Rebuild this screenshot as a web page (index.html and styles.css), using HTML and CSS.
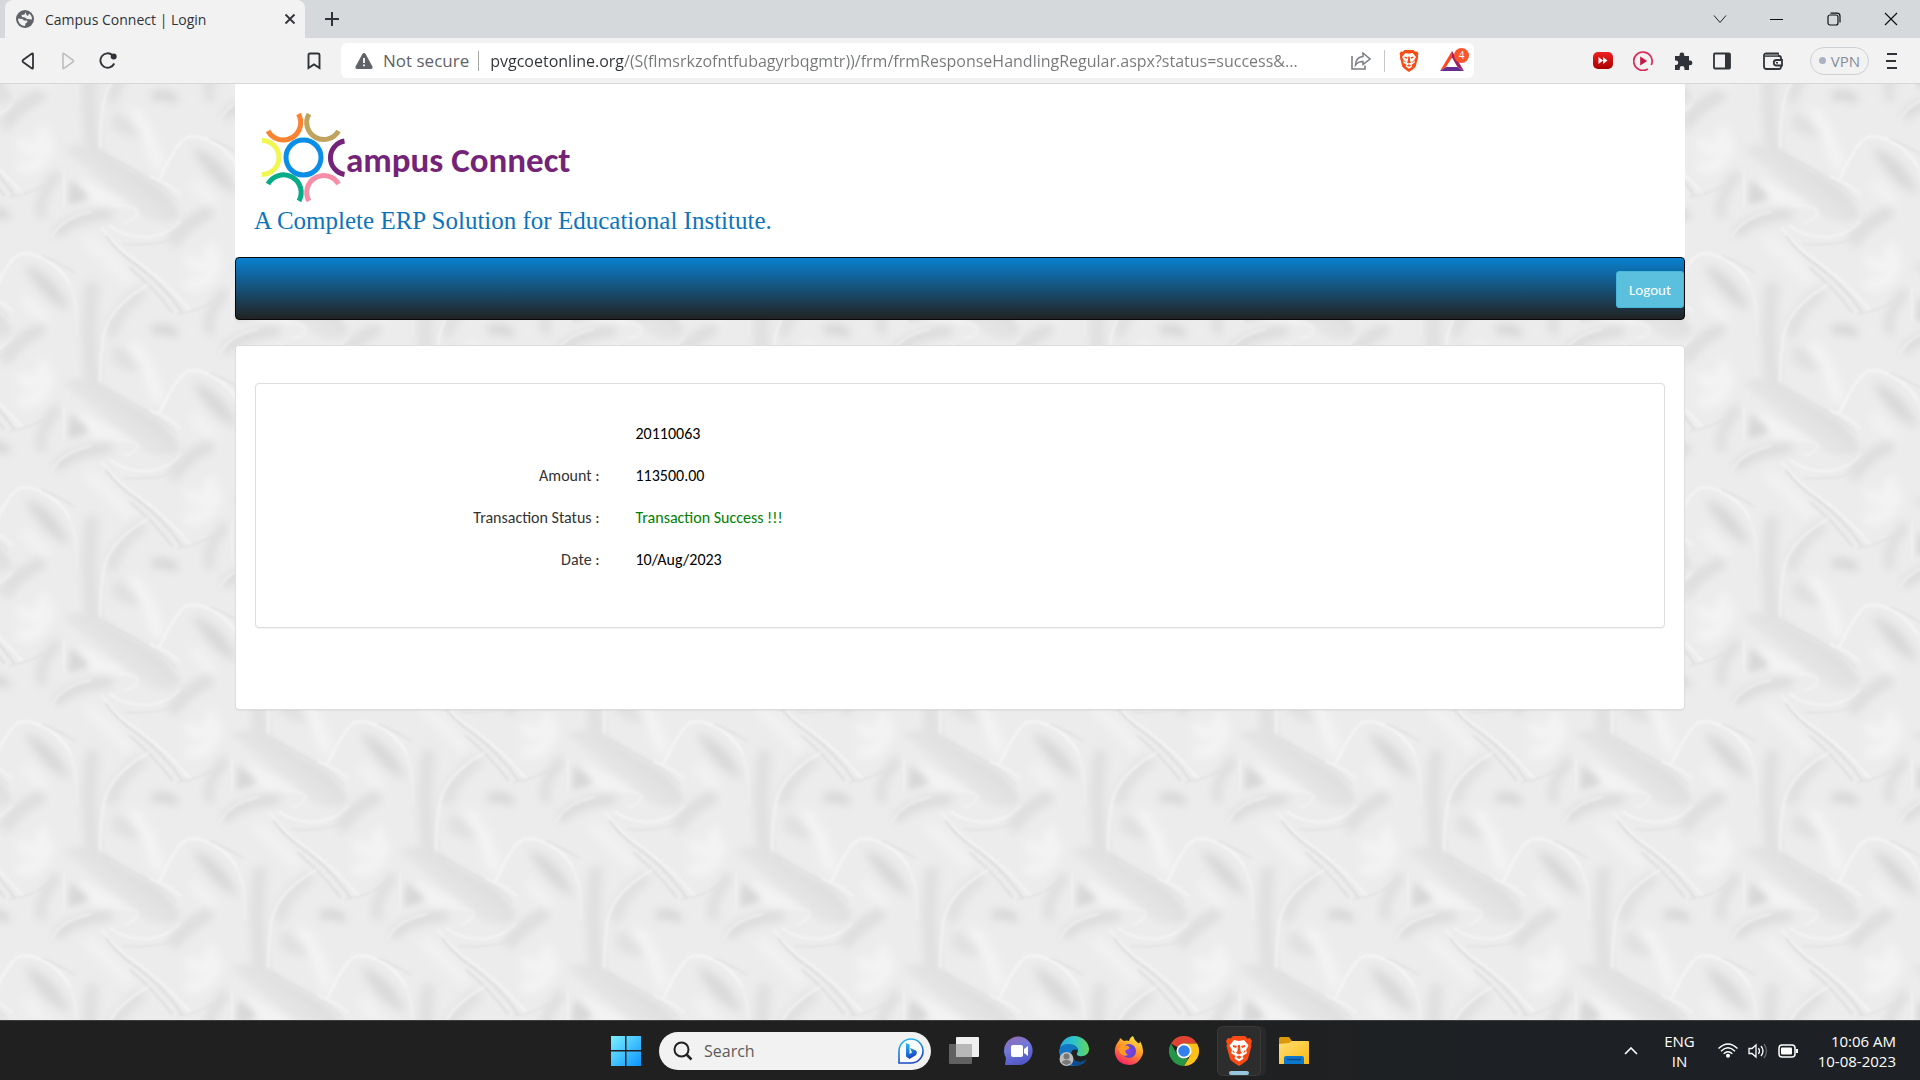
FILE: index.html
```html
<!DOCTYPE html>
<html lang="en">
<head>
<meta charset="utf-8">
<meta name="viewport" content="width=device-width, initial-scale=1">
<title>Campus Connect | Login</title>
<link rel="stylesheet" href="styles.css">
</head>
<body class="desktop">
<header class="browser">
  <div class="tab-strip">
    <div class="tab">
      <svg class="tab-icon" width="18" height="18" viewBox="0 0 18 18" aria-hidden="true"><circle cx="9" cy="9" r="9" fill="#5f6368"/><path d="M2 8.500 L6.500 9 L8 10.500 L11 10.500 L11.500 12 L9.500 13.500 L9 16 A7 7 0 0 1 2 8.500Z M9.500 2 L8.500 4.500 L5.500 5 L6 7 L9 7.500 L11 9 L16 9.500 A7 7 0 0 0 13 3.500 L12 6 L10.500 5Z" fill="#f2f2f2"/></svg>
      <span class="tab-title">Campus Connect | Login</span>
      <button class="icon-button" type="button" aria-label="Close tab"><svg width="12" height="12" viewBox="0 0 12 12"><path d="M1.500 1.500 L10.500 10.500 M10.500 1.500 L1.500 10.500" stroke="#303438" stroke-width="1.800"/></svg></button>
    </div>
    <button class="icon-button new-tab" type="button" aria-label="New tab"><svg width="16" height="16" viewBox="0 0 16 16"><path d="M8 1V15M1 8H15" stroke="#303438" stroke-width="2"/></svg></button>
    <div class="window-controls">
      <button class="icon-button" type="button" aria-label="Search tabs"><svg width="14" height="14" viewBox="0 0 14 14"><path d="M1 3.500 L7 10.500 L13 3.500" fill="none" stroke="#222"/></svg></button>
      <button class="icon-button" type="button" aria-label="Minimize"><svg width="14" height="14" viewBox="0 0 14 14"><path d="M0 7.500H13" stroke="#111"/></svg></button>
      <button class="icon-button" type="button" aria-label="Restore"><svg width="14" height="14" viewBox="0 0 14 14"><rect x="1" y="3" width="10" height="10" rx="2" fill="none" stroke="#111" stroke-width="1.200"/><path d="M3.500 1.200H10A3 3 0 0 1 13 4.200V10.500" fill="none" stroke="#111" stroke-width="1.200"/></svg></button>
      <button class="icon-button" type="button" aria-label="Close window"><svg width="14" height="14" viewBox="0 0 14 14"><path d="M1 1 L13 13 M13 1 L1 13" stroke="#111" stroke-width="1.200"/></svg></button>
    </div>
  </div>
  <div class="toolbar">
    <div class="nav-buttons">
      <button class="icon-button" type="button" aria-label="Back"><svg width="18" height="18" viewBox="0 0 18 18"><path d="M14 2.300V15.700Q14 17 13 16.400L4 10Q3 9 4 8L13 1.600Q14 1 14 2.300Z" fill="none" stroke="#303438" stroke-width="1.800"/></svg></button>
      <button class="icon-button" type="button" aria-label="Forward" disabled><svg width="18" height="18" viewBox="0 0 18 18"><path d="M4 2.300V15.700Q4 17 5 16.400L14 10Q15 9 14 8L5 1.600Q4 1 4 2.300Z" fill="none" stroke="#bdbdbd" stroke-width="1.600"/></svg></button>
      <button class="icon-button" type="button" aria-label="Reload"><svg width="18" height="18" viewBox="0 0 18 18"><path d="M13.500 3.200A7.200 7.200 0 1 0 15.200 11.500" fill="none" stroke="#303438" stroke-width="1.900"/><circle cx="14.700" cy="4.500" r="3" fill="#303438"/></svg></button>
      <button class="icon-button bookmark" type="button" aria-label="Bookmark this page"><svg width="14" height="18" viewBox="0 0 14 18"><path d="M1.500 16V3Q1.500 1.500 3 1.500H11Q12.500 1.500 12.500 3V16L7 12.500Z" fill="none" stroke="#303438" stroke-width="1.900"/></svg></button>
    </div>
    <form class="address-bar">
      <svg width="18" height="16" viewBox="0 0 18 16" aria-hidden="true"><path d="M9 0Q10 0 10.600 1L17.400 13.500Q18 16 16 16H2Q0 16 .600 13.500L7.400 1Q8 0 9 0Z" fill="#5f6368"/><path d="M9 5V10M9 11.500V13.300" stroke="#fff" stroke-width="1.800"/></svg>
      <label class="security" for="url">Not secure</label>
      <input class="url" id="url" type="text" value="pvgcoetonline.org/(S(flmsrkzofntfubagyrbqgmtr))/frm/frmResponseHandlingRegular.aspx?status=success&amp;...">
      <button class="icon-button share" type="button" aria-label="Share"><svg width="20" height="18" viewBox="0 0 20 18"><path d="M1 4V17H14V13.500" fill="none" stroke="#7b7f83" stroke-width="1.600"/><path d="M12 1L19 7L12 12.500V9.500Q7 9.500 4.500 13Q5 5 12 4.500Z" fill="none" stroke="#7b7f83" stroke-width="1.500"/></svg></button>
      <button class="icon-button shields" type="button" aria-label="Brave Shields"><svg width="20" height="22" viewBox="0 0 26 30"><use href="#brave-lion"/></svg></button>
      <button class="icon-button rewards" type="button" aria-label="Brave Rewards, 4 notifications"><svg width="24" height="20" viewBox="0 0 24 20"><path d="M12 0L0 20L6 16L12 6.500Z" fill="#ff4724"/><path d="M12 0L24 20L17.500 16L12 6.500Z" fill="#9e1f63"/><path d="M0 20H24L17.500 16H6Z" fill="#662d91"/></svg><span class="badge">4</span></button>
    </form>
    <div class="extensions">
      <button class="icon-button" type="button" aria-label="Video speed"><svg width="20" height="17" viewBox="0 0 20 17"><defs><linearGradient id="red" x2="0" y2="1"><stop stop-color="#f02020"/><stop offset="1" stop-color="#a80000"/></linearGradient></defs><rect width="20" height="17" rx="5" fill="url(#red)"/><path d="M5.500 5L10 8.500L5.500 12ZM10 5L14.500 8.500L10 12Z" fill="#fff"/></svg></button>
      <button class="icon-button" type="button" aria-label="Player"><svg width="20" height="20" viewBox="0 0 20 20"><path d="M14.800 18A9.200 9.200 0 1 1 18.300 14" fill="none" stroke="#dc2858" stroke-width="1.700"/><path d="M7.200 5.500L14.200 10L7.200 14.500Z" fill="#c31746"/></svg></button>
      <button class="icon-button" type="button" aria-label="Extensions"><svg width="20" height="20" viewBox="0 0 20 20"><path d="M2 5H6.500V4A2.400 2.400 0 0 1 11.300 4V5H16V9.500H17A2.400 2.400 0 0 1 17 14.300H16V19H11.500V17.500A2.400 2.400 0 0 0 6.700 17.500V19H2V14H3A2.200 2.200 0 0 0 3 9.500H2Z" fill="#303438"/></svg></button>
      <button class="icon-button" type="button" aria-label="Sidebar"><svg width="18" height="18" viewBox="0 0 18 18"><rect x="1" y="1.500" width="16" height="15" rx="1" fill="none" stroke="#303438" stroke-width="1.800"/><path d="M12 2H17V16H12Z" fill="#303438"/></svg></button>
      <button class="icon-button wallet" type="button" aria-label="Wallet"><svg width="20" height="18" viewBox="0 0 20 18"><path d="M2 4H16Q18 4 18 6V8M18 13V14.500Q18 17 16 17H3.500Q1 17 1 14.500V3.500Q1 1.500 3.500 1.500H15V4" fill="none" stroke="#303438" stroke-width="1.800"/><path d="M2 2H15V4.500H2Z" fill="#777a7d"/><path d="M19 8V13.500H13.500A2.700 2.700 0 0 1 13.500 8Z" fill="#f2f2f2" stroke="#303438" stroke-width="1.800"/><path d="M13 10.800H15" stroke="#303438" stroke-width="1.600"/></svg></button>
      <button class="vpn" type="button"><span class="vpn-dot"></span>VPN</button>
      <button class="icon-button menu" type="button" aria-label="Menu"><svg width="12" height="16" viewBox="0 0 12 16"><path d="M1 1H11M0 8H10M1 15H11" stroke="#303438" stroke-width="1.800"/></svg></button>
    </div>
  </div>
</header>

<main class="page">
  <svg class="satin" width="100%" height="100%" aria-hidden="true">
    <defs>
      <filter id="soft" x="-20%" y="-20%" width="140%" height="140%"><feGaussianBlur stdDeviation="5"/></filter>
      <filter id="fine" x="-20%" y="-20%" width="140%" height="140%"><feGaussianBlur stdDeviation="1"/></filter>
      <filter id="medium" x="-20%" y="-20%" width="140%" height="140%"><feGaussianBlur stdDeviation="3"/></filter>
      <linearGradient id="fold-shade" gradientUnits="userSpaceOnUse" x1="100" y1="120" x2="135" y2="75"><stop stop-color="#ebebeb"/><stop offset="1" stop-color="#dcdcdc"/></linearGradient>
      <g id="fold" fill="none" stroke-linecap="round">
        <g filter="url(#soft)">
          <path d="M92 -30Q86 15 93 64" stroke="#dfdfdf" stroke-width="14"/>
          <path d="M140 -24Q116 -6 112 14" stroke="#dfdfdf" stroke-width="12"/>
          <path d="M192 64Q222 70 238 110Q212 102 192 64" fill="#d8d8d8"/>
          <path d="M6 42Q22 18 40 12" stroke="#dedede" stroke-width="9"/>
          <path d="M58 148Q76 132 108 130" stroke="#d8d8d8" stroke-width="9"/>
          <path d="M42 130Q36 118 56 92" stroke="#dcdcdc" stroke-width="9"/>
          <path d="M174 152Q190 138 208 128" stroke="#dfdfdf" stroke-width="9"/>
          <path d="M112 30Q124 24 142 52Q130 56 112 44Z" fill="#e0e0e0"/>
          <path d="M190 200Q208 202 216 178M22 60Q38 75 44 48M158 80Q150 50 135 30" stroke="#f4f4f4" stroke-width="12"/>
          <path d="M90 158Q110 175 128 195M196 100Q206 112 212 118" stroke="#f2f2f2" stroke-width="12"/>
          <path d="M155 12Q166 9 174 15" stroke="#cecece" stroke-width="7"/>
        </g>
        <path d="M64 64Q88 56 104 68Q122 81 146 94Q170 108 180 130Q180 136 166 138Q146 140 134 122Q106 102 64 66Z" fill="url(#fold-shade)" filter="url(#medium)"/>
        <g filter="url(#medium)">
          <path d="M70 96L90 112Q80 120 68 120Z" fill="#d8d8d8"/>
          <path d="M78 92L128 120Q110 123 92 119Z" fill="#f3f3f3"/>
        </g>
        <g filter="url(#fine)" opacity=".85">
          <path d="M104 70Q124 80 148 94Q166 104 176 116" stroke="#d6d6d6" stroke-width="1"/>
          <path d="M150 93Q168 98 180 110" stroke="#f6f6f6" stroke-width="2"/>
          <path d="M160 94Q176 60 186 54Q194 50 210 57Q231 68 238 84" stroke="#f9f9f9" stroke-width="2"/>
          <path d="M238 84Q246 102 245 134" stroke="#f2f2f2" stroke-width="2"/>
          <path d="M210 55Q226 61 243 72" stroke="#e0e0e0" stroke-width="2"/>
          <path d="M148 -33Q110 -12 104 16Q100 38 100 64" stroke="#f5f5f5" stroke-width="2"/>
          <path d="M64 88V120M114 121Q132 122 137 126Q140 132 126 138" stroke="#f3f3f3" stroke-width="2"/>
          <path d="M52 152Q62 134 90 128" stroke="#f1f1f1" stroke-width="2"/>
          <path d="M110 142Q124 153 148 153Q170 150 180 137" stroke="#f7f7f7" stroke-width="2"/>
          <path d="M124 160Q144 162 164 158Q178 152 188 142" stroke="#e2e2e2" stroke-width="2"/>
          <path d="M102 144Q118 166 138 178Q168 200 190 226" stroke="#f7f7f7" stroke-width="2"/>
          <path d="M106 152Q118 169 138 182Q164 202 182 228" stroke="#d8d8d8" stroke-width="2"/>
          <path d="M130 184Q154 204 172 228" stroke="#dadada" stroke-width="2"/>
          <path d="M178 230Q196 228 212 218" stroke="#e0e0e0" stroke-width="2"/>
        </g>
      </g>
      <pattern id="satin-tile" width="336" height="234" patternUnits="userSpaceOnUse">
        <rect width="336" height="234" fill="#ececec"/>
        <use href="#fold" x="-168" y="-117"/><use href="#fold" x="168" y="-117"/>
        <use href="#fold" x="0" y="0"/><use href="#fold" x="336" y="0"/>
        <use href="#fold" x="-168" y="117"/><use href="#fold" x="168" y="117"/>
        <use href="#fold" x="0" y="234"/><use href="#fold" x="336" y="234"/>
      </pattern>
    </defs>
    <rect width="100%" height="100%" fill="url(#satin-tile)"/>
  </svg>
  <div class="container">
    <section class="masthead">
      <h1 class="logo">
        <svg width="84" height="92" viewBox="262 112 84 92" role="img" aria-label="C" fill="none" stroke-width="5">
          <circle cx="303.500" cy="157.500" r="17.500" stroke="#0a8ee6"/>
          <path d="M298.500 114A17 17 0 1 1 268 131" stroke="#fb8231"/>
          <path d="M309 114A17 17 0 1 0 338.500 131" stroke="#c0a35c"/>
          <path d="M262 140.500A17 17 0 0 1 262 174.500" stroke="#f1f653"/>
          <path d="M344.500 141A17 17 0 0 0 344.500 174.500" stroke="#742478"/>
          <path d="M268 184A17 17 0 0 1 299 201" stroke="#06ac87"/>
          <path d="M338.500 184A17 17 0 0 0 309 201" stroke="#f78da7"/>
        </svg>
        <span class="logo-text">ampus Connect</span>
      </h1>
      <p class="tagline">A Complete ERP Solution for Educational Institute.</p>
    </section>
    <nav class="navbar"><button class="logout" type="button">Logout</button></nav>
    <section class="panel">
      <div class="receipt">
        <dl class="details">
          <dt></dt><dd>20110063</dd>
          <dt>Amount :</dt><dd>113500.00</dd>
          <dt>Transaction Status :</dt><dd class="success">Transaction Success !!!</dd>
          <dt>Date :</dt><dd>10/Aug/2023</dd>
        </dl>
      </div>
    </section>
  </div>
</main>

<footer class="taskbar">
  <div class="apps">
    <button class="app" type="button" aria-label="Start"><svg width="30" height="30" viewBox="0 0 30 30"><defs><linearGradient id="win" x2="1" y2="1"><stop stop-color="#7df0ff"/><stop offset="1" stop-color="#0a95ff"/></linearGradient></defs><path d="M0 0H14V14H0ZM15.500 0H30V14H15.500ZM0 15.500H14V30H0ZM15.500 15.500H30V30H15.500Z" fill="url(#win)"/></svg></button>
    <form class="search">
      <svg width="20" height="20" viewBox="0 0 20 20" aria-hidden="true"><circle cx="8.500" cy="8.500" r="7" fill="none" stroke="#222" stroke-width="2"/><path d="M13.500 13.500L18.500 18.500" stroke="#222" stroke-width="2.500"/></svg>
      <input class="search-input" type="search" placeholder="Search" aria-label="Search">
      <svg width="26" height="26" viewBox="0 0 26 26" aria-hidden="true"><defs><linearGradient id="bing" x1="0" y1="0" x2=".3" y2="1"><stop stop-color="#27c3f2"/><stop offset="1" stop-color="#1b45c4"/></linearGradient></defs><path d="M1 25V13A12 12 0 1 1 13 25Z" fill="#f8fcff" stroke="url(#bing)" stroke-width="1.600"/><path d="M8 5L11.500 6.500V16L14 14.500L12 10L18 12.500Q20 15 17.500 17.500L11.500 21L8 18.500Z" fill="url(#bing)"/></svg>
    </form>
    <button class="app" type="button" aria-label="Task view"><svg width="30" height="30" viewBox="0 0 30 30"><rect x="7" y="1" width="23" height="20" rx="1" fill="#f0f0f0"/><rect x="0" y="8" width="23" height="20" rx="1" fill="#777" opacity=".75"/><path d="M7 8H23V21H7Z" fill="#b8b8b8"/></svg></button>
    <button class="app" type="button" aria-label="Chat"><svg width="30" height="30" viewBox="0 0 30 30"><defs><linearGradient id="chat" x2=".4" y2="1"><stop stop-color="#9b6bb0"/><stop offset=".5" stop-color="#7078d8"/><stop offset="1" stop-color="#5459c8"/></linearGradient></defs><path d="M1 29L2 22A14.300 14.300 0 1 1 15 29Z" fill="url(#chat)"/><rect x="7" y="9" width="12" height="12" rx="2" fill="#fff"/><path d="M20 13L24 10V20L20 17Z" fill="#fff"/></svg></button>
    <button class="app" type="button" aria-label="Edge"><svg width="30" height="30" viewBox="0 0 30 30"><defs><linearGradient id="edge"><stop stop-color="#2ba8e0"/><stop offset=".5" stop-color="#2fc5c8"/><stop offset="1" stop-color="#66d657"/></linearGradient></defs><path d="M1 14A14 14 0 0 1 15 0C24 0 30 7 30 13C30 18 26 21 20 20C16 19 19 17 19 14C18 8 8 6 1 14Z" fill="url(#edge)"/><path d="M0 14Q3 7 10 8Q18 9 19 14Q12 12 12 19Q13 26 22 26Q26 25 28 23Q24 30 15 30C6 30 0 23 0 14Z" fill="#1277c4"/><path d="M12 19Q14 27 22 26Q26 25 28 23Q24 30 15 30Q8 26 12 19Z" fill="#0c4b91"/><circle cx="7.500" cy="23" r="7" fill="#bdbdbd"/><circle cx="7.500" cy="20.500" r="3" fill="#777"/><path d="M3 27Q3 24 7.500 24Q12 24 12 27L7.500 29Z" fill="#777"/></svg></button>
    <button class="app" type="button" aria-label="Firefox"><svg width="30" height="30" viewBox="0 0 30 30"><defs><linearGradient id="fox" x1=".8" x2=".3" y2="1"><stop stop-color="#fff044"/><stop offset=".5" stop-color="#ff9028"/><stop offset="1" stop-color="#f5206b"/></linearGradient><radialGradient id="globe"><stop stop-color="#8b3cf5"/><stop offset="1" stop-color="#5a48c8"/></radialGradient></defs><path d="M4 6Q6 4 6 2L10 5Q13 4 15 5Q16 1 19 0Q20 4 24 7Q26 8 26 5Q31 14 28 20Q24 29 15 29Q4 29 1 18Q0 11 4 6Z" fill="url(#fox)"/><circle cx="15" cy="15" r="7" fill="url(#globe)"/><path d="M4 12Q9 8 14 10Q18 12 12 14Q10 16 14 19Q9 21 6 17Z" fill="#ff9a26"/></svg></button>
    <button class="app" type="button" aria-label="Chrome"><svg width="30" height="30" viewBox="0 0 30 30"><path d="M15 15L2 7.500A15 15 0 0 1 28 7.500H15Z" fill="#df4334"/><path d="M15 7.500H28A15 15 0 0 1 15 30L21.500 19Z" fill="#fbc116"/><path d="M2 7.500L8.500 19L15 22.500H19.500L15 30A15 15 0 0 1 2 7.500Z" fill="#269547"/><circle cx="15" cy="15" r="7.500" fill="#fff"/><circle cx="15" cy="15" r="5.800" fill="#3180ee"/></svg></button>
    <button class="app app-active" type="button" aria-label="Brave"><svg width="26" height="30" viewBox="0 0 26 30"><g id="brave-lion"><path d="M7 0H19L21.500 2.500L24 2L26 5L25 8L25.500 10L22 23Q21 25 13 30Q5 25 4 23L.5 10L1 8L0 5L2 2L4.500 2.500Z" fill="#fb4b14"/><path d="M8 4L13 5L18 4L22.500 9.500L20 14L21 17L16.500 20L17.500 22.500L13 25.500L8.500 22.500L9.500 20L5 17L6 14L3.500 9.500Z" fill="#fff"/><path d="M7 9L11 10L10 12L7 11ZM19 9L15 10L16 12L19 11ZM12 9H14L14.500 15L16 17L13 18.500L10 17L11.500 15ZM10 21L13 19.500L16 21L13 23ZM7 14L9 17L6.500 16ZM19 14L17 17L19.500 16Z" fill="#fb4b14"/></g></svg></button>
    <button class="app" type="button" aria-label="File Explorer"><svg width="30" height="27" viewBox="0 0 30 27"><defs><linearGradient id="dir" x2="1" y2="1"><stop stop-color="#ffdf72"/><stop offset="1" stop-color="#fcb914"/></linearGradient></defs><path d="M0 1.500Q0 0 1.500 0H10L13 4V8H0Z" fill="#dc9a0b"/><path d="M0 7L10 6L13 4H29Q30 4 30 5V27H0Z" fill="url(#dir)"/><path d="M5 27V21Q5 19 7 19H23Q25 19 25 21V27Z" fill="#0c78cd"/><path d="M8 22.500H22" stroke="#0a4b8c" stroke-width="1.500"/></svg></button>
  </div>
  <div class="tray">
    <button class="icon-button" type="button" aria-label="Show hidden icons"><svg width="14" height="8" viewBox="0 0 14 8"><path d="M1 7L7 1L13 7" fill="none" stroke="#fff" stroke-width="1.600"/></svg></button>
    <button class="tray-text language" type="button">ENG<br>IN</button>
    <div class="status">
      <svg width="20" height="15" viewBox="0 0 20 15" role="img" aria-label="Wi-Fi" fill="none" stroke="#fff" stroke-width="1.400"><path d="M.500 5.500Q10 -3.500 19.500 5.500M3 8.200Q10 1.500 17 8.200M5.700 10.800Q10 6.500 14.300 10.800"/><circle cx="10" cy="12.800" r="1.300" fill="#fff"/></svg>
      <svg width="20" height="18" viewBox="0 0 20 18" role="img" aria-label="Volume" fill="none" stroke="#fff" stroke-width="1.300"><path d="M1 6.500H4L8 3V15L4 11.500H1Z"/><path d="M10.500 6Q12.500 9 10.500 12M13 4Q17 9 13 14"/><path d="M16 2Q21 9 16 16" stroke="#666"/></svg>
      <svg width="20" height="14" viewBox="0 0 20 14" role="img" aria-label="Battery"><rect x="1" y="1" width="16" height="12" rx="3" fill="none" stroke="#fff" stroke-width="1.500"/><rect x="3" y="3.500" width="11" height="7" rx="1" fill="#fff"/><path d="M18 5V9H20V5Z" fill="#fff"/></svg>
    </div>
    <button class="tray-text clock" type="button">10:06 AM<br>10-08-2023</button>
  </div>
</footer>
</body>
</html>
```
FILE: styles.css
```css
* { box-sizing: border-box; }

.desktop {
  margin: 0;
  min-height: 100vh;
  display: flex;
  flex-direction: column;
  font-family: "Open Sans", "Noto Sans", sans-serif;
}

svg { display: block; flex: none; }
button, input { font: inherit; }

.icon-button {
  display: flex;
  align-items: center;
  justify-content: center;
  padding: 0;
  border: 0;
  background: none;
}

/* Browser chrome */
.browser { background: #f2f2f2; border-bottom: 1px solid #d5d7d9; }

.tab-strip {
  display: flex;
  align-items: center;
  height: 38px;
  padding: 0 22px 0 5px;
  background: #d5d9dc;
}

.tab {
  display: flex;
  align-items: center;
  align-self: stretch;
  gap: 11px;
  width: 300px;
  padding: 0 9px 0 11px;
  border-radius: 8px 8px 0 0;
  background: #f2f2f2;
}

.tab-title { flex: 1; font-size: 14px; color: #303438; }
.new-tab { margin-left: 19px; }
.window-controls { display: flex; gap: 43px; margin-left: auto; }

.toolbar {
  display: grid;
  grid-template-columns: 341px 1fr 446px;
  align-items: center;
  height: 45px;
}

.nav-buttons { display: flex; align-items: center; gap: 22px; padding: 0 20px 0 19px; }
.bookmark { margin-left: auto; }

.address-bar {
  display: flex;
  align-items: center;
  height: 35px;
  padding: 0 5px 0 14px;
  border-radius: 6px;
  background: #fff;
}

.security {
  margin: 0 11px 0 10px;
  padding-right: 9px;
  border-right: 1px solid #a8a8a8;
  font-size: 17px;
  line-height: 20px;
  color: #5f6368;
}

.url {
  flex: 1;
  min-width: 0;
  padding: 0;
  border: 0;
  outline: 0;
  font-size: 16px;
  /* host name dark, path grey */
  color: transparent;
  background: linear-gradient(90deg, #303438 134px, #757779 134px);
  background-clip: text;
}

.share { margin: 0 13px 0 20px; }
.shields { padding-left: 14px; border-left: 1px solid #c8c8c8; }
.rewards { position: relative; margin: 0 5px 0 21px; }

.badge {
  position: absolute;
  top: -3px;
  right: -5px;
  width: 15px;
  border-radius: 8px;
  background: #fb542b;
  font-size: 10px;
  line-height: 15px;
  color: #fff;
}

.extensions { display: flex; align-items: center; gap: 20px; padding: 0 22px; justify-content: flex-end; }
.wallet { margin-left: 12px; }

.vpn {
  display: flex;
  align-items: center;
  gap: 5px;
  height: 28px;
  margin-left: 7px;
  padding: 0 8px;
  border: 1px solid #ccd1d6;
  border-radius: 14px;
  background: none;
  font-size: 15px;
  color: #868e9a;
}

.vpn-dot { width: 7px; height: 7px; border-radius: 50%; background: #aeb1c4; }
.menu { margin-left: -3px; }

/* Web page */
.page {
  position: relative;
  flex: 1;
  font-family: Calibri, Carlito, Lato, sans-serif;
  font-size: 16px;
  line-height: 20px;
}

.satin { position: absolute; inset: 0; }

.container { position: relative; max-width: 1450px; margin: 0 auto; }
.masthead { padding: 28px 19px 20px; background: #fff; }
.logo { display: flex; align-items: center; margin: 0; padding-left: 8px; }
.logo-text { padding-top: 3px; font-size: 35px; line-height: 40px; color: #742478; }

.tagline {
  margin: 0;
  font-family: "Liberation Serif", serif;
  font-size: 25px;
  line-height: 33px;
  color: #0b74bd;
}

.navbar {
  display: flex;
  justify-content: flex-end;
  height: 63px;
  margin-bottom: 25px;
  padding-top: 13px;
  border: 1px solid #080808;
  border-radius: 4px;
  background: linear-gradient(#0a80d0, #222);
}

.logout {
  height: 37px;
  padding: 0 12px;
  border: 1px solid #46b8da;
  border-radius: 3px;
  background: #5bc0de;
  font-size: 15px;
  color: #fff;
}

.panel {
  padding: 37px 19px 81px;
  border: 1px solid #ddd;
  border-radius: 4px;
  background: #fff;
  box-shadow: 0 1px 1px rgba(0, 0, 0, .05);
}

.receipt {
  padding: 40px 15px;
  border: 1px solid #ddd;
  border-radius: 4px;
  box-shadow: 0 1px 1px rgba(0, 0, 0, .05);
}

.details {
  display: grid;
  grid-template-columns: 1fr 3fr;
  row-gap: 22px;
  margin: 0 0 17px;
}

.details dt { padding-right: 16px; text-align: right; color: #333; }
.details dd { margin: 0; padding-left: 20px; color: #000; }
.details .success { color: #008000; }

/* Taskbar */
.taskbar {
  display: grid;
  grid-template-columns: 1fr auto 1fr;
  align-items: center;
  height: 60px;
  border-top: 1px solid #3c3e3f;
  background: linear-gradient(90deg, #202020 60%, #1d2125 80%);
}

.apps { display: flex; align-items: center; grid-column: 2; gap: 11px; }

.app {
  position: relative;
  display: flex;
  align-items: center;
  justify-content: center;
  width: 44px;
  height: 50px;
  padding: 0;
  border: 0;
  border-radius: 6px;
  background: none;
}

.app-active { background: #2d2d2d; box-shadow: inset 0 0 0 1px #393939, 5px 0 0 #292929; }

.app-active::after {
  content: "";
  position: absolute;
  bottom: 1px;
  width: 20px;
  height: 4px;
  border-radius: 2px;
  background: #98c5dd;
}

.search {
  display: flex;
  align-items: center;
  gap: 11px;
  width: 272px;
  height: 38px;
  padding: 0 7px 0 14px;
  border-radius: 19px;
  background: #f2f2f2;
}

.search-input {
  flex: 1;
  min-width: 0;
  padding: 0;
  border: 0;
  outline: 0;
  background: none;
  font-size: 16px;
}

.search-input::placeholder { color: #5c5c5c; }

.tray { display: flex; align-items: center; justify-content: flex-end; padding-right: 24px; }

.tray-text {
  padding: 0;
  border: 0;
  background: none;
  font-size: 15px;
  line-height: 20px;
  color: #fff;
}

.language { margin: 0 23px 0 26px; }
.status { display: flex; align-items: center; gap: 10px; margin-right: 20px; }
.clock { text-align: right; }
```
